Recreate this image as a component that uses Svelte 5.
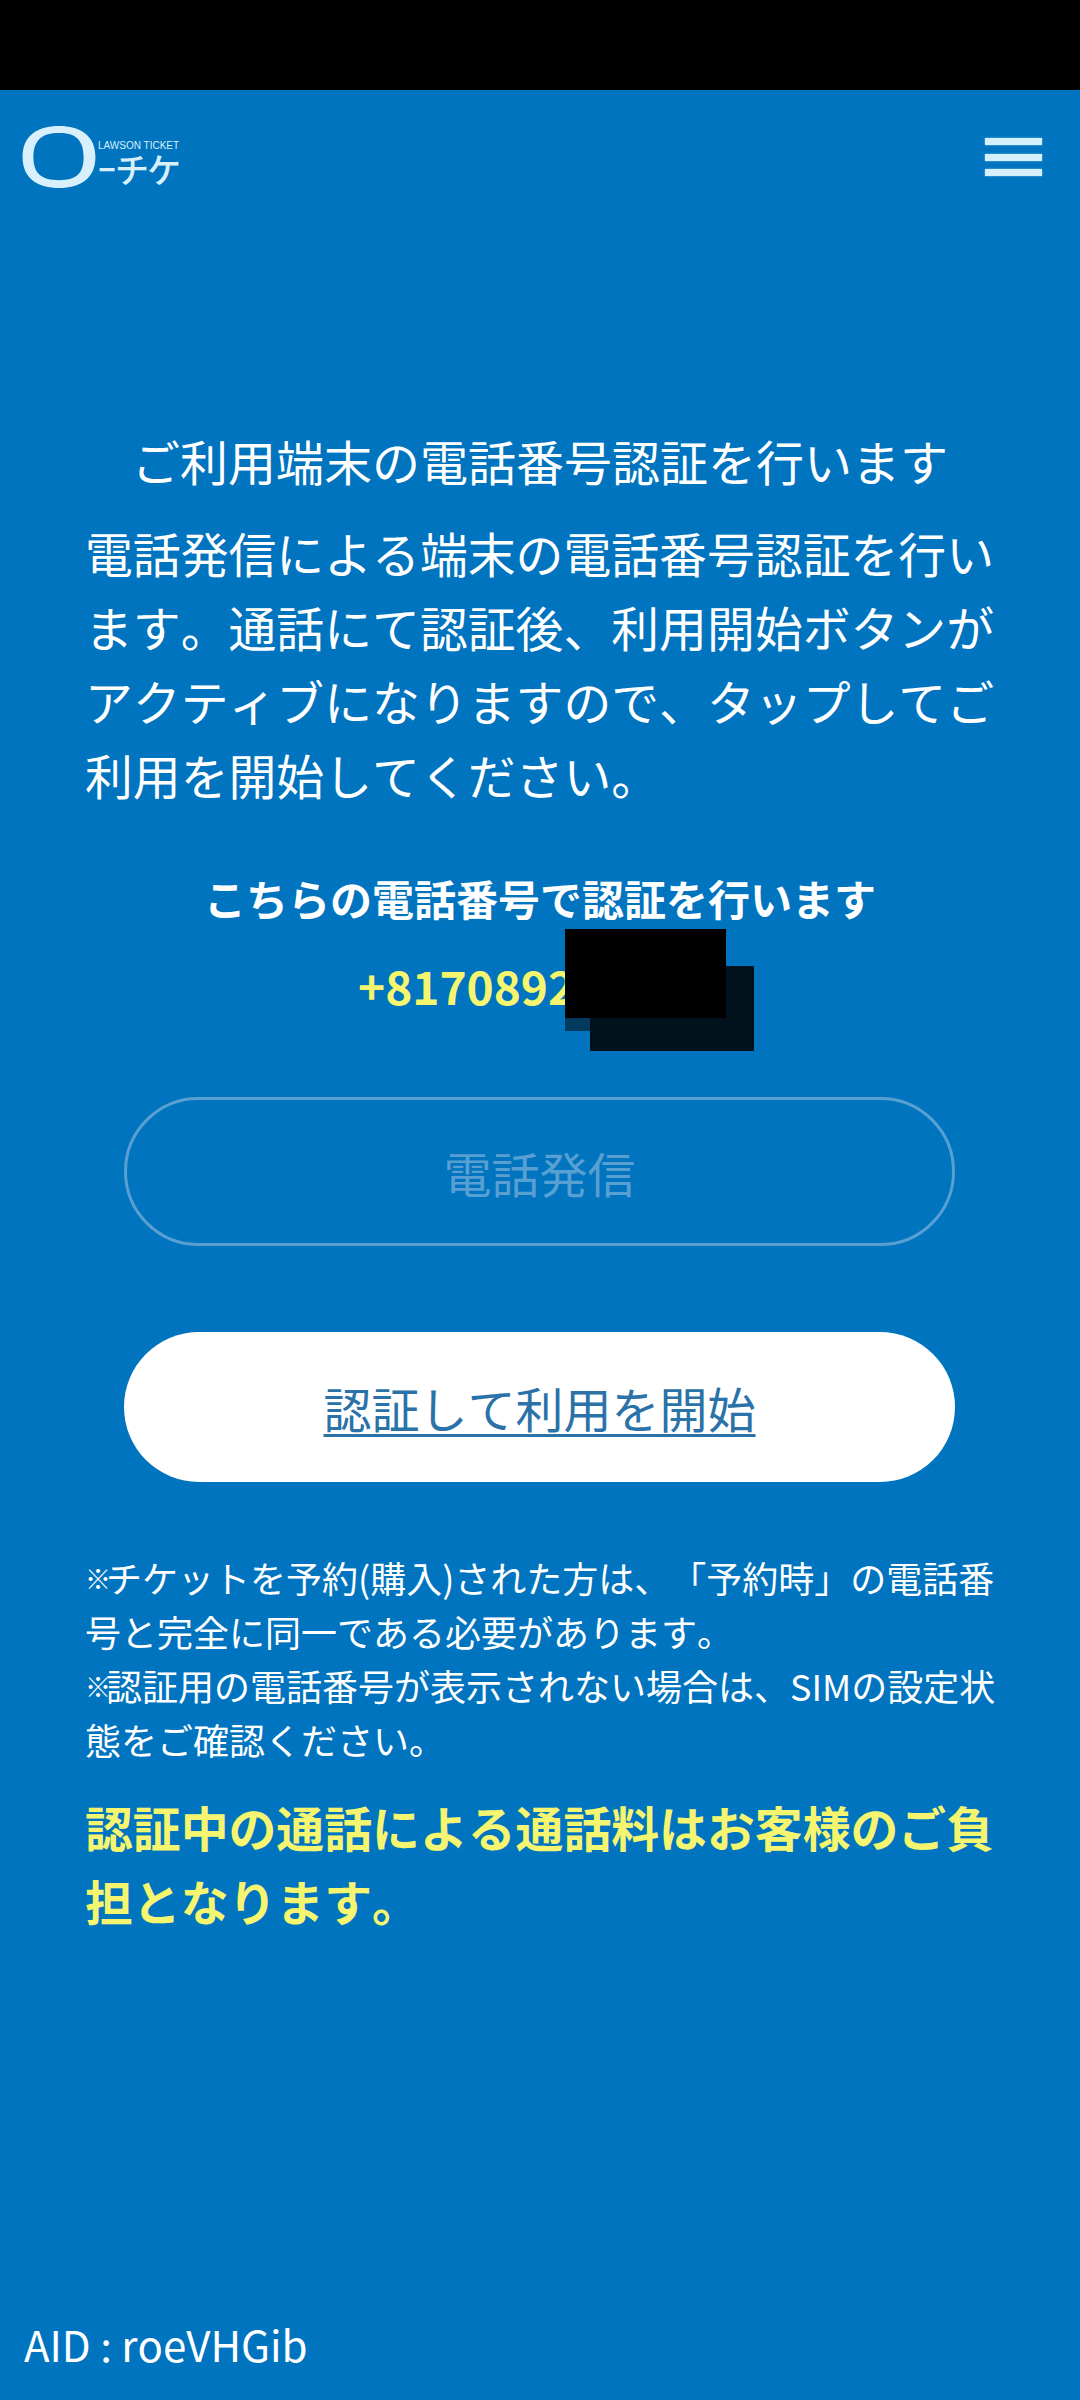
<script>
  const lead = '電話発信による端末の電話番号認証を行います。通話にて認証後、利用開始ボタンがアクティブになりますので、タップしてご利用を開始してください。';
</script>

<div class="page">
  <div class="statusbar"></div>
  <header class="header">
    <div class="logo">
      <svg class="logo-o" viewBox="0 0 74 63" aria-hidden="true">
        <path fill="#d8f0fb" fill-rule="evenodd" d="M37 0C58 0 74 9 74 31.500S58 63 37 63S0 54 0 31.500S16 0 37 0ZM37 7C20 7 11 14 11 31.500S20 55 37 55S62 49 62 31.500S54 7 37 7Z"/>
      </svg>
      <div class="logo-text">
        <span class="logo-en">LAWSON TICKET</span>
        <span class="logo-jp"><small>ー</small>チケ</span>
      </div>
    </div>
    <div class="menu"><i></i><i></i><i></i></div>
  </header>
  <main class="main">
    <h1>ご利用端末の電話番号認証を行います</h1>
    <p class="lead">{lead}</p>
    <p class="sub">こちらの電話番号で認証を行います</p>
    <div class="phone">
      <span>+8170892</span>
      <div class="scrub three"></div>
      <div class="scrub tail"></div>
      <div class="scrub one"></div>
    </div>
    <div class="btn disabled">電話発信</div>
    <div class="btn primary"><span>認証して利用を開始</span></div>
    <p class="note"><small>※</small>チケットを予約(購入)された方は、「予約時」の電話番号と完全に同一である必要があります。<br><small>※</small>認証用の電話番号が表示されない場合は、SIMの設定状態をご確認ください。</p>
    <p class="warn">認証中の通話による通話料はお客様のご負担となります。</p>
  </main>
  <footer class="aid">AID : roeVHGib</footer>
</div>

<style>
  :global(body) { margin: 0; background: #0074bf; }
  .page {
    width: 1080px; height: 2400px; background: #0074bf; color: #fff; overflow: hidden;
    display: flex; flex-direction: column;
    font-family: "Noto Sans CJK JP", "Noto Sans", sans-serif;
    font-kerning: none;
    text-spacing-trim: space-all;
  }
  .statusbar { height: 90px; background: #000; flex: none; }
  .header { height: 130px; padding: 36px 38px 0 22px; box-sizing: border-box; display: flex; justify-content: space-between; align-items: flex-start; flex: none; }
  .logo { display: flex; align-items: flex-start; }
  .logo-o { width: 74px; height: 62px; display: block; }
  .logo-text { display: flex; flex-direction: column; margin-left: 2px; }
  .logo-en { font: 400 10px/12px "Liberation Sans", sans-serif; color: #d8f0fb; margin-top: 14px; white-space: nowrap; }
  .logo-jp { font-size: 34px; line-height: 34px; font-weight: 500; color: #d8f0fb; white-space: nowrap; display: flex; align-items: center; letter-spacing: -2px; }
  .logo-jp small { font-size: 18px; font-weight: 900; letter-spacing: -2px; margin-right: 1px; }
  .menu { display: flex; flex-direction: column; gap: 8.500px; margin-top: 12px; }
  .menu i { display: block; width: 57px; height: 7px; background: #d5effc; box-shadow: 0 0 2px #8fcdf0; }
  .main { padding: 203px 85px 0; display: flex; flex-direction: column; flex: 1; }
  h1 { margin: 0; font-size: 48px; font-weight: 400; line-height: 74px; text-align: center; white-space: nowrap; }
  .lead { margin: 18px 0 0; font-size: 47.850px; line-height: 74px; width: 915px; }
  .sub { margin: 57px 0 0; font-size: 42px; line-height: 60px; font-weight: 700; text-align: center; white-space: nowrap; }
  .phone { position: relative; margin-top: 22px; height: 70px; font-size: 46px; line-height: 70px; font-weight: 700; color: #f6f56f; padding-left: 273px; }
  .scrub { position: absolute; background: #000; }
  .one { left: 480px; top: -21px; width: 161px; height: 89px; }
  .three { left: 505px; top: 16px; width: 164px; height: 85px; background: #02121d; }
  .tail { left: 480px; top: 68px; width: 25px; height: 13px; background: #023a5e; }
  .btn { width: 831px; margin-left: 39px; border-radius: 75px; box-sizing: border-box; display: flex; align-items: center; justify-content: center; font-size: 48px; flex: none; }
  .disabled { height: 149px; margin-top: 77px; border: 3px solid #589fd2; color: #589fd2; }
  .primary { height: 150px; margin-top: 86px; background: #fff; color: #2a72a8; }
  .primary span { text-decoration: underline; text-decoration-thickness: 3px; text-underline-offset: 6px; }
  .note { margin: 68px 0 0; font-size: 36px; line-height: 54px; width: 915px; }
  .note small { font-size: 26px; font-weight: 900; line-height: 0; vertical-align: 4px; letter-spacing: -5px; }
  .warn { margin: 23px 0 0; font-size: 47.850px; line-height: 74px; font-weight: 700; color: #f6f56f; width: 915px; }
  .aid { position: absolute; left: 24px; top: 2316px; font-size: 42px; line-height: 56px; }
</style>
